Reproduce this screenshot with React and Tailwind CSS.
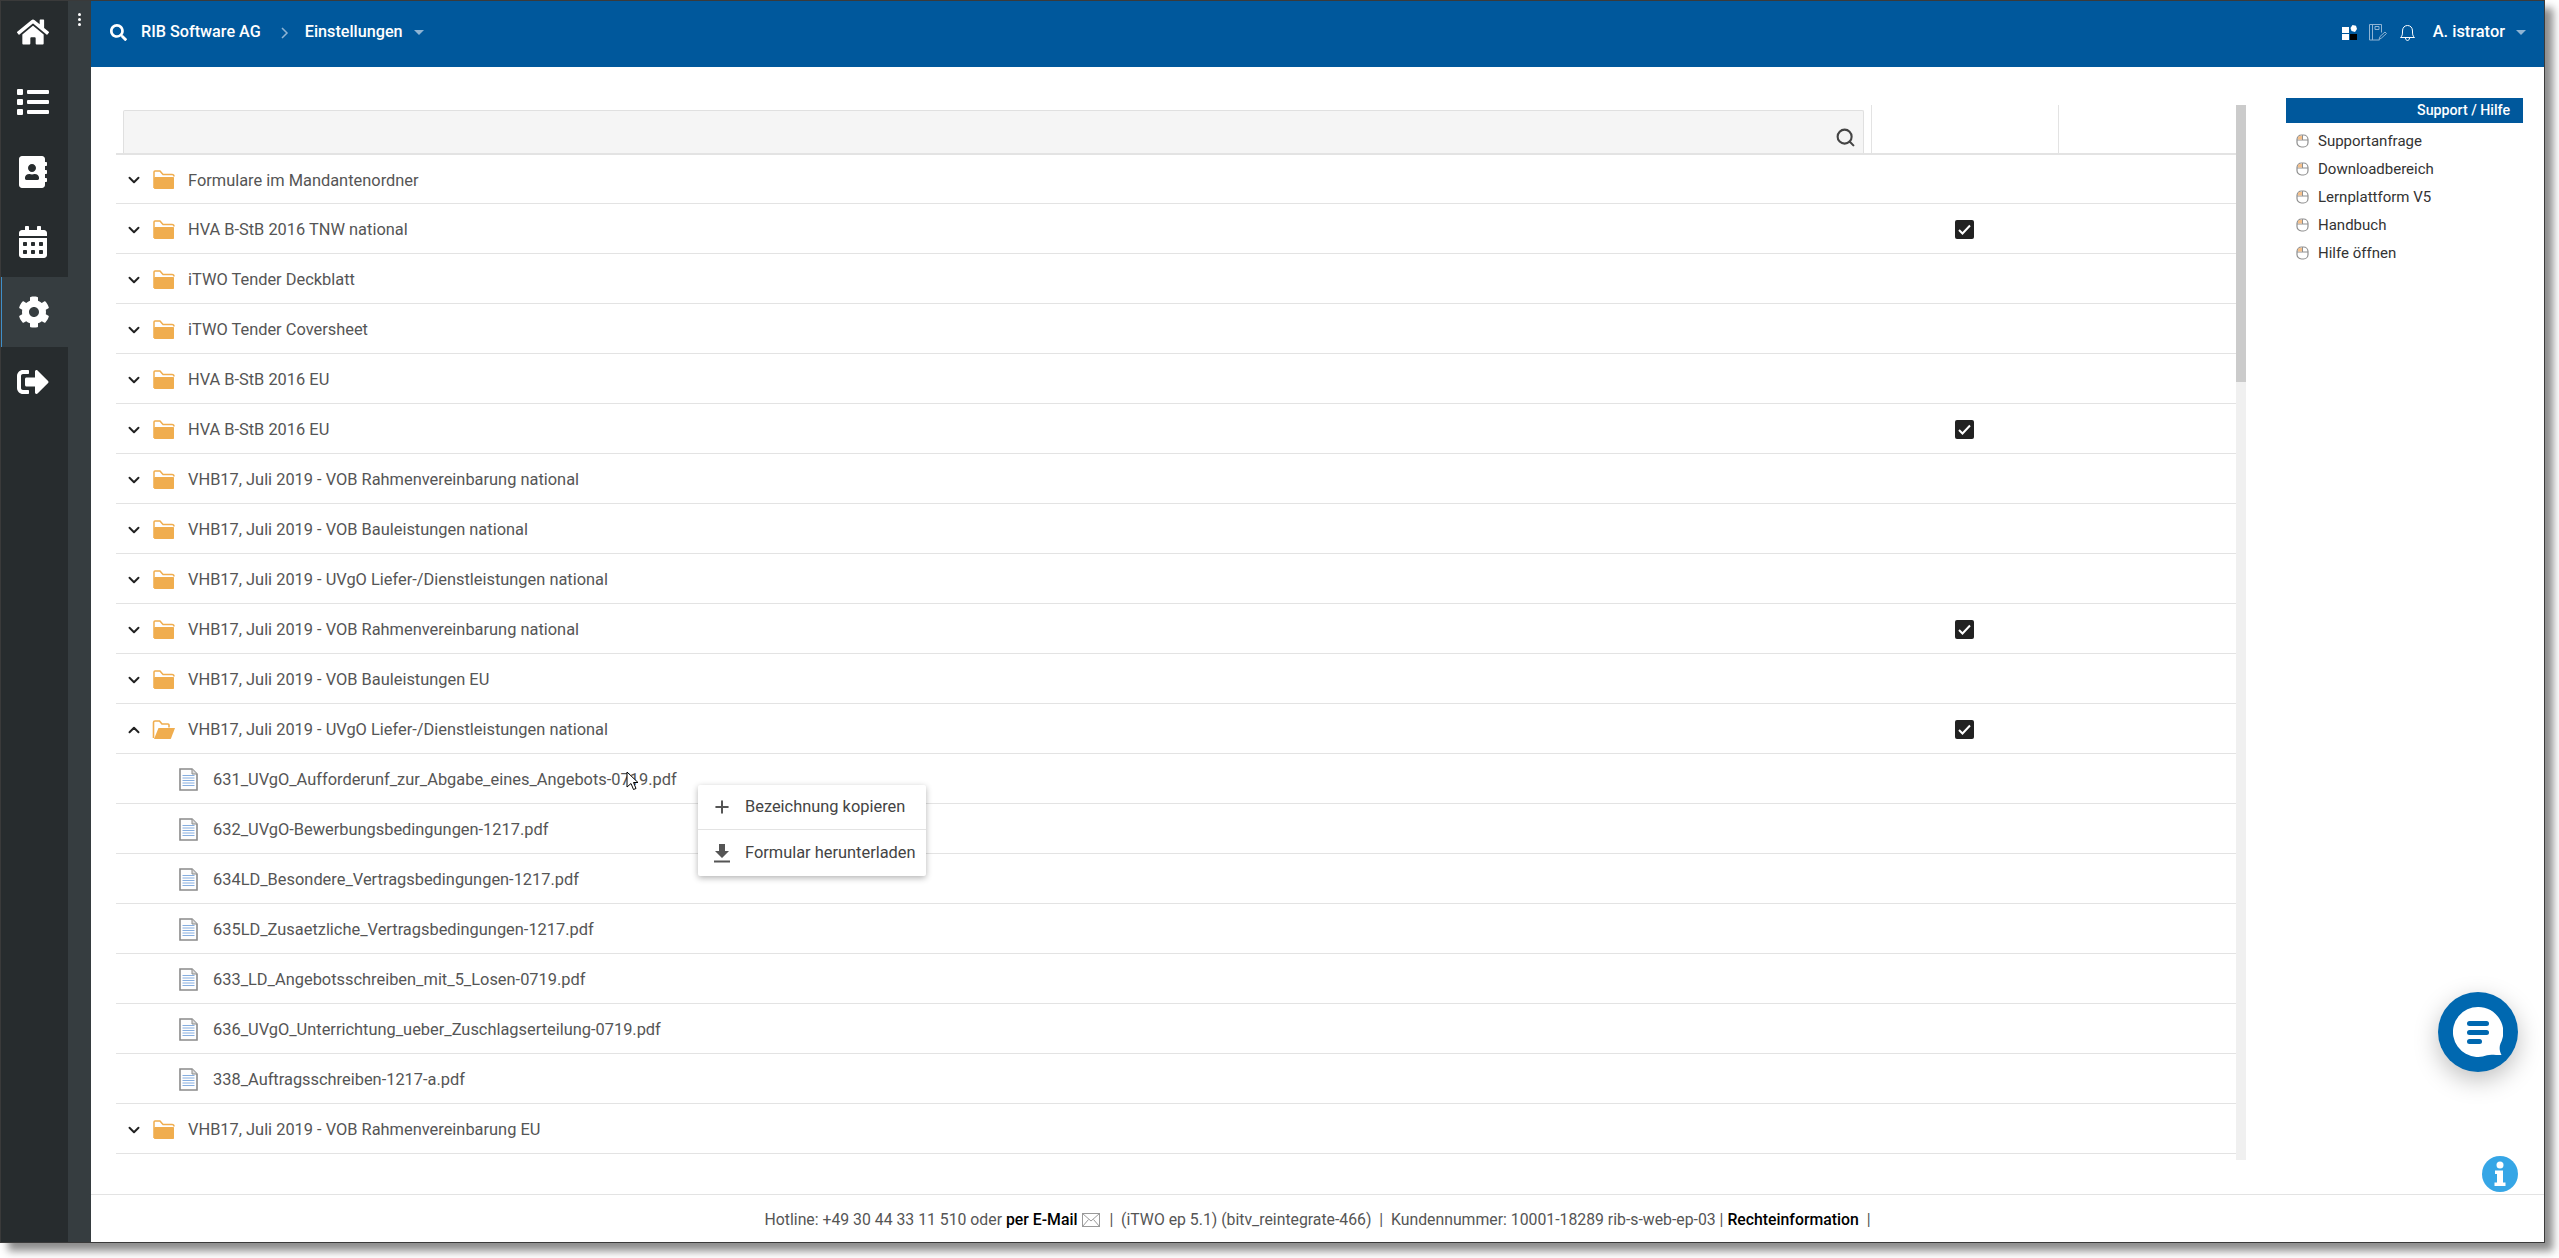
import { ChevronDown, ChevronUp, Plus, Search } from 'lucide-react';
import { FaHome, FaList, FaAddressBook, FaCalendarAlt, FaCog, FaSignOutAlt, FaSearch } from 'react-icons/fa';

const rows = [
  { name: 'Formulare im Mandantenordner' },
  { name: 'HVA B-StB 2016 TNW national', checked: true },
  { name: 'iTWO Tender Deckblatt' },
  { name: 'iTWO Tender Coversheet' },
  { name: 'HVA B-StB 2016 EU' },
  { name: 'HVA B-StB 2016 EU', checked: true },
  { name: 'VHB17, Juli 2019 - VOB Rahmenvereinbarung national' },
  { name: 'VHB17, Juli 2019 - VOB Bauleistungen national' },
  { name: 'VHB17, Juli 2019 - UVgO Liefer-/Dienstleistungen national' },
  { name: 'VHB17, Juli 2019 - VOB Rahmenvereinbarung national', checked: true },
  { name: 'VHB17, Juli 2019 - VOB Bauleistungen EU' },
  { name: 'VHB17, Juli 2019 - UVgO Liefer-/Dienstleistungen national', checked: true, open: true },
  { name: '631_UVgO_Aufforderunf_zur_Abgabe_eines_Angebots-0719.pdf', file: true },
  { name: '632_UVgO-Bewerbungsbedingungen-1217.pdf', file: true },
  { name: '634LD_Besondere_Vertragsbedingungen-1217.pdf', file: true },
  { name: '635LD_Zusaetzliche_Vertragsbedingungen-1217.pdf', file: true },
  { name: '633_LD_Angebotsschreiben_mit_5_Losen-0719.pdf', file: true },
  { name: '636_UVgO_Unterrichtung_ueber_Zuschlagserteilung-0719.pdf', file: true },
  { name: '338_Auftragsschreiben-1217-a.pdf', file: true },
  { name: 'VHB17, Juli 2019 - VOB Rahmenvereinbarung EU' },
];

const navItems = [FaHome, FaList, FaAddressBook, FaCalendarAlt, FaCog, FaSignOutAlt];
const helpLinks = ['Supportanfrage', 'Downloadbereich', 'Lernplattform V5', 'Handbuch', 'Hilfe öffnen'];

function FolderIcon({ open }) {
  if (open) {
    return (
      <svg width="23" height="20" viewBox="0 0 23 20" className="ml-[-1px] shrink-0">
        <path d="M1.500 18V2.500C1.500 1.700 2 1 3 1h4.500l2.500 3h6c.6 0 1 .4 1 1v2.500" fill="none" stroke="#f0ad4e" strokeWidth="1.600" />
        <path d="M6.500 8H23l-4 10.500c-.2.4-.6.5-1 .5H2z" fill="#f0ad4e" />
      </svg>
    );
  }
  return (
    <svg width="22" height="20" viewBox="0 0 22 20" className="shrink-0">
      <path d="M1 18V2c0-.6.4-1 1-1h5l3 3.500h9c1 0 2 1 2 2" fill="none" stroke="#f0ad4e" strokeWidth="1.500" />
      <path d="M1 8.500c0-1 .8-1.500 1.500-1.500H20c.6 0 1 .4 1 1V18c0 .6-.4 1-1 1H2c-.6 0-1-.4-1-1z" fill="#f0ad4e" />
    </svg>
  );
}

function FileIcon() {
  return (
    <svg width="19" height="23" viewBox="0 0 19 23" className="shrink-0">
      <path d="M1 1h12l5 5v16H1z" fill="#fdfdfd" stroke="#8a8a8a" strokeWidth="1.600" />
      <path d="M13 1v5h5" fill="#dcdcdc" stroke="#8a8a8a" />
      <path d="M3.500 7.500h12M3.500 10h12M3.500 12.500h12M3.500 15h12M3.500 17.500h12" stroke="#86aee0" />
    </svg>
  );
}

function MouseIcon() {
  return (
    <svg width="13" height="14" viewBox="0 0 13 14" className="shrink-0">
      <rect x="1" y="1" width="11" height="12" rx="4.500" fill="#fff" stroke="#8f8f8f" strokeWidth="1.200" />
      <path d="M1 6h11M6.500 1v5" stroke="#8f8f8f" />
      <path d="M2 5.400V3.500C2 2.600 3 2 6 1.800v3.600z" fill="#f6c08a" />
    </svg>
  );
}

function CheckBox() {
  return (
    <span className="flex h-[19px] w-[19px] items-center justify-center rounded-[2px] bg-[#212121]">
      <svg width="15" height="13" viewBox="0 0 15 13">
        <path d="M2 7l3.500 3.500L13 2.500" fill="none" stroke="#fff" strokeWidth="2" />
      </svg>
    </span>
  );
}

function Row({ row, first }) {
  return (
    <div className={`flex shrink-0 border-b border-[#e3e3e3] ${first ? 'h-[49px]' : 'h-[50px]'}`}>
      <div className={`flex flex-1 items-center pt-[2px] ${row.file ? 'pl-[63px]' : 'pl-[9px]'}`}>
        {row.file ? (
          <FileIcon />
        ) : (
          <>
            {row.open ? (
              <ChevronUp size={18} strokeWidth={2.6} className="mr-[10px] shrink-0 text-[#222]" />
            ) : (
              <ChevronDown size={18} strokeWidth={2.6} className="mr-[10px] shrink-0 text-[#222]" />
            )}
            <FolderIcon open={row.open} />
          </>
        )}
        <span className={`mt-[2px] text-[16.4px] text-[#555] ${row.file ? 'ml-[15px]' : 'ml-[13px]'}`}>{row.name}</span>
      </div>
      <div className="flex w-[187px] items-center justify-center pt-[2px]">{row.checked && <CheckBox />}</div>
      <div className="w-[178px]" />
    </div>
  );
}

export default function App() {
  return (
    <div className="h-[1258px] w-[2559px] bg-white font-['Roboto',sans-serif]">
      <div className="flex h-[1243px] w-[2545px] border border-[#3a3a3a] shadow-[8px_8px_8px_rgba(0,0,0,0.45)]">
        {/* dark nav rail */}
        <nav className="flex w-[67px] flex-col bg-[#272c2e]">
          {navItems.map((Icon, i) => (
            <div
              key={i}
              className={`flex items-center justify-center pr-[3px] ${i === 0 ? 'h-[66px] pb-[4px]' : 'h-[70px]'} ${i === 4 ? 'border-l border-[#3f8fc9] bg-[#363d40]' : ''}`}
            >
              <Icon size={32} className="text-white" />
            </div>
          ))}
        </nav>
        <div className="flex w-[23px] flex-col items-center gap-[2px] bg-[#363d40] pt-[12px]">
          <span className="h-[3px] w-[3px] rounded-full bg-white" />
          <span className="h-[3px] w-[3px] rounded-full bg-white" />
          <span className="h-[3px] w-[3px] rounded-full bg-white" />
        </div>

        <div className="relative flex min-w-0 flex-1 flex-col bg-white">
          <header className="flex h-[66px] shrink-0 items-center bg-[#00589c] pb-[3px] pl-[19px] pr-[18px] text-white">
            <FaSearch size={17} />
            <span className="ml-[14px] text-[16.2px] font-medium">RIB Software AG</span>
            <svg width="8" height="12" viewBox="0 0 8 12" className="ml-[20px]">
              <path d="M1 1l5 5-5 5" fill="none" stroke="#8fb4d4" strokeWidth="1.500" />
            </svg>
            <span className="ml-[16px] text-[16.2px] font-medium">Einstellungen</span>
            <span className="ml-[11px] h-0 w-0 border-x-[5px] border-t-[5px] border-x-transparent border-t-[#8fb4d4]" />
            <div className="ml-auto flex items-center">
              <svg width="15" height="15" viewBox="0 0 15 15">
                <rect x="0" y="2" width="7" height="6" fill="#fff" />
                <rect x="0" y="9" width="7" height="6" fill="#fff" />
                <rect x="8" y="9" width="7" height="6" fill="#000" />
                <path d="M10.500 0l3.500.8L15 4l-2 3-3.500-1L8.500 3z" fill="#fff" />
              </svg>
              <svg width="18" height="17" viewBox="0 0 18 17" className="ml-[12px]" fill="none" stroke="#8fb4d4">
                <path d="M.5.500h12v8M.5.500v15.500h10M3.500.500v15.500M6 2.500h4v3H6z" />
                <path d="M10 15.500l1-3 5-4.500 1.500 1.500-5 4.500z" />
              </svg>
              <svg width="15" height="17" viewBox="0 0 15 17" className="ml-[13px]" fill="none" stroke="#fff">
                <path d="M.5 13.500h14c-2-1.500-2-3.500-2-6.500 0-3.500-2.200-5.500-5-5.500S2.500 3.500 2.500 7c0 3 0 5-2 6.500zM5.500 14c0 1.500 1 2.500 2 2.500s2-1 2-2.500" />
              </svg>
              <span className="ml-[18px] text-[16.4px] font-medium">A. istrator</span>
              <span className="ml-[11px] h-0 w-0 border-x-[5px] border-t-[5px] border-x-transparent border-t-[#8fb4d4]" />
            </div>
          </header>

          <main className="flex min-h-0 flex-1 pl-[25px] pt-[38px]">
            <section className="flex w-[2120px] flex-col">
              <div className="flex h-[50px] shrink-0 border-b-2 border-[#e3e3e3]">
                <div className="flex flex-1 items-end pl-[7px] pr-[7px]">
                  <div className="flex h-[43px] w-full items-center justify-end rounded-t-[2px] border-x border-t border-[#e0e0e0] bg-[#f5f5f5] pr-[7px]">
                    <Search size={21} strokeWidth={2.4} className="mt-[10px] text-[#444]" />
                  </div>
                </div>
                <div className="w-[187px] border-l border-[#e3e3e3]" />
                <div className="w-[178px] border-l border-[#e3e3e3]" />
              </div>
              {rows.map((row, i) => (
                <Row key={i} row={row} first={i === 0} />
              ))}
            </section>
            <div className="h-[1055px] w-[10px] shrink-0 bg-[#f0f0f0]">
              <div className="h-[277px] bg-[#cbcbcb]" />
            </div>
            <aside className="ml-[40px] mt-[-7px] w-[237px] shrink-0">
              <div className="mb-[4px] h-[25px] bg-[#00589c] pr-[13px] text-right text-[14.2px] font-medium leading-[25px] text-white">
                Support / Hilfe
              </div>
              {helpLinks.map((l) => (
                <div key={l} className="flex h-[28px] items-center pl-[10px] text-[15px] text-[#333]">
                  <MouseIcon />
                  <span className="ml-[9px]">{l}</span>
                </div>
              ))}
            </aside>
          </main>

          <footer className="flex h-[48px] shrink-0 items-center justify-center whitespace-pre border-t border-[#e3e3e3] pt-[3px] text-[15.8px] text-[#555]">
            <span>Hotline: +49 30 44 33 11 510 oder </span>
            <strong className="font-medium text-black">per E-Mail</strong>
            <svg width="18" height="14" viewBox="0 0 18 14" className="mx-[5px]" fill="none" stroke="#999">
              <rect x=".5" y=".5" width="17" height="13" />
              <path d="M.5.500L9 8l8.500-7.500M.5 13.500l6-7M17.500 13.500l-6-7" />
            </svg>
            <span> |  (iTWO ep 5.1) (bitv_reintegrate-466)  |  Kundennummer: 10001-18289 rib-s-web-ep-03 | </span>
            <strong className="font-medium text-black">Rechteinformation</strong>
            <span>  |</span>
          </footer>

          {/* context menu */}
          <div className="absolute left-[607px] top-[784px] w-[228px] rounded-[2px] bg-white text-[16.4px] text-[#444] shadow-[0_2px_6px_rgba(0,0,0,0.3)]">
            <div className="flex h-[45px] items-center border-b border-[#e3e3e3] pl-[14px]">
              <Plus size={20} strokeWidth={2.4} className="text-[#555]" />
              <span className="ml-[13px]">Bezeichnung kopieren</span>
            </div>
            <div className="flex h-[46px] items-center pl-[14px]">
              <svg width="20" height="20" viewBox="0 0 18 20" className="text-[#555]">
                <path d="M6 1h6v7h4l-7 7-7-7h4zM1 17.500h16v2H1z" fill="currentColor" />
              </svg>
              <span className="ml-[13px]">Formular herunterladen</span>
            </div>
          </div>

          {/* mouse pointer */}
          <svg width="13" height="20" viewBox="0 0 13 20" className="absolute left-[535px] top-[770px]">
            <path d="M1 1v15l4-3.500 2.500 6 2.500-1-2.500-6H12z" fill="#fff" stroke="#000" />
          </svg>

          {/* chat button */}
          <div className="absolute left-[2347px] top-[991px] flex h-[80px] w-[80px] items-center justify-center rounded-full bg-[#0068b0] shadow-[0_8px_24px_rgba(0,0,0,0.25)]">
            <svg width="50" height="50" viewBox="0 0 50 50">
              <path d="M25 0a25 25 0 1 0 9 48.300c3-1.200 8-.3 14.500-.3-2-4-2.500-7.500-1-11.500A25 25 0 0 0 25 0z" fill="#fff" />
              <rect x="14" y="14" width="22" height="5" rx="2.500" fill="#0068b0" />
              <rect x="14" y="23" width="22" height="5" rx="2.500" fill="#0068b0" />
              <rect x="14" y="32" width="15" height="5" rx="2.500" fill="#0068b0" />
            </svg>
          </div>

          {/* info */}
          <svg width="36" height="36" viewBox="0 0 36 36" className="absolute left-[2391px] top-[1155px]">
            <circle cx="18" cy="18" r="18" fill="#36a6e6" />
            <circle cx="18" cy="9" r="3.500" fill="#fff" />
            <path d="M13 14.500h8v12h2.500V30h-11v-3.500H15v-8.500h-2z" fill="#fff" />
          </svg>
        </div>
      </div>
    </div>
  );
}
